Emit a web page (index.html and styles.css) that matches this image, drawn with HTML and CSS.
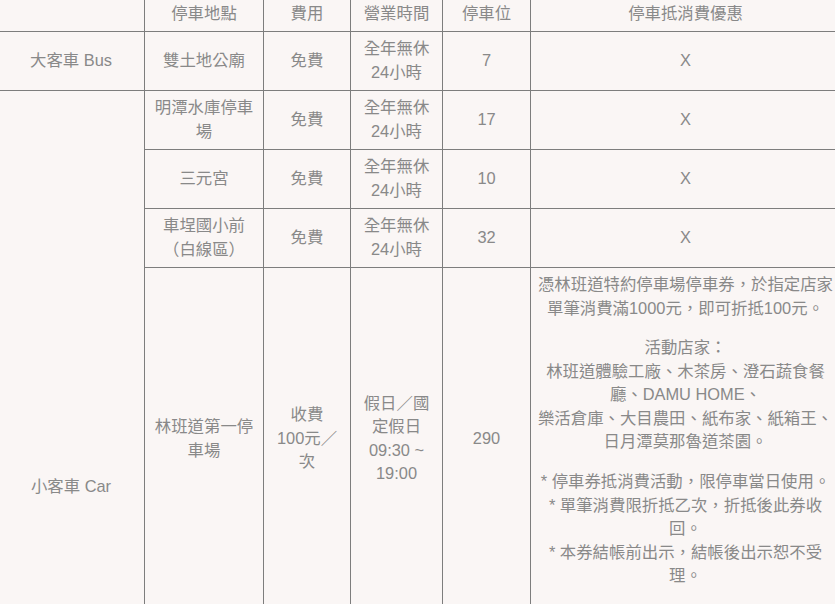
FILE: index.html
```html
<!DOCTYPE html>
<html lang="zh-Hant">
<head>
<meta charset="utf-8">
<title>停車資訊</title>
<link rel="stylesheet" href="styles.css">
</head>
<body>
<table class="parking">
  <colgroup>
    <col class="c-type">
    <col class="c-place">
    <col class="c-fee">
    <col class="c-hours">
    <col class="c-slots">
    <col class="c-offer">
  </colgroup>
  <thead>
    <tr>
      <th></th>
      <th>停車地點</th>
      <th>費用</th>
      <th>營業時間</th>
      <th>停車位</th>
      <th>停車抵消費優惠</th>
    </tr>
  </thead>
  <tbody>
    <tr>
      <td>大客車 Bus</td>
      <td>雙土地公廟</td>
      <td>免費</td>
      <td>全年無休<br>24小時</td>
      <td>7</td>
      <td>X</td>
    </tr>
    <tr>
      <td rowspan="5">小客車 Car</td>
      <td>明潭水庫停車場</td>
      <td>免費</td>
      <td>全年無休<br>24小時</td>
      <td>17</td>
      <td>X</td>
    </tr>
    <tr>
      <td>三元宮</td>
      <td>免費</td>
      <td>全年無休<br>24小時</td>
      <td>10</td>
      <td>X</td>
    </tr>
    <tr>
      <td>車埕國小前<br>（白線區）</td>
      <td>免費</td>
      <td>全年無休<br>24小時</td>
      <td>32</td>
      <td>X</td>
    </tr>
    <tr>
      <td>林班道第一停車場</td>
      <td>收費<br>100元／次</td>
      <td>假日／國定假日<br>09:30 ~ 19:00</td>
      <td>290</td>
      <td class="offer">
        <p>憑林班道特約停車場停車券，於指定店家單筆消費滿1000元，即可折抵100元。</p>
        <p>活動店家：<br>林班道體驗工廠、木茶房、澄石蔬食餐廳、DAMU HOME、<br>樂活倉庫、大目農田、紙布家、紙箱王、<br>日月潭莫那魯道茶園。</p>
        <p>* 停車券抵消費活動，限停車當日使用。<br>* 單筆消費限折抵乙次，折抵後此券收回。<br>* 本券結帳前出示，結帳後出示恕不受理。</p>
      </td>
    </tr>
    <tr>
      <td>林班道第二停車場</td>
      <td>收費<br>100元／次</td>
      <td>假日／國定假日<br>09:30 ~ 19:00</td>
      <td>120</td>
      <td class="offer">
        <p>憑林班道特約停車場停車券，於指定店家單筆消費滿1000元，即可折抵100元。</p>
        <p>活動店家：<br>林班道體驗工廠、木茶房、澄石蔬食餐廳、DAMU HOME、<br>樂活倉庫、大目農田、紙布家、紙箱王、<br>日月潭莫那魯道茶園。</p>
        <p>* 停車券抵消費活動，限停車當日使用。<br>* 單筆消費限折抵乙次。</p>
      </td>
    </tr>
  </tbody>
</table>
</body>
</html>
```

FILE: styles.css
```css
html, body {
  margin: 0;
  padding: 0;
  overflow: hidden;
  background: #faf6f5;
}

body {
  font-family: "Liberation Sans", "Noto Sans CJK TC", "Noto Sans", sans-serif;
  font-size: 16.4px;
  line-height: 23.5px;
  color: #898989;
}

.parking {
  border-collapse: collapse;
  table-layout: fixed;
  width: 843px;
  margin: -5px 0 0 -3px;
}

.c-type { width: 147px; }
.c-place { width: 119px; }
.c-fee { width: 87px; }
.c-hours { width: 92px; }
.c-slots { width: 88px; }
.c-offer { width: 310px; }

.parking th,
.parking td {
  border: 1px solid #7d7d7d;
  padding: 5.5px 6px;
  text-align: center;
  vertical-align: middle;
  font-weight: normal;
}

.parking td.offer {
  vertical-align: top;
}

.offer p {
  margin: 0 0 16.4px;
}
```
